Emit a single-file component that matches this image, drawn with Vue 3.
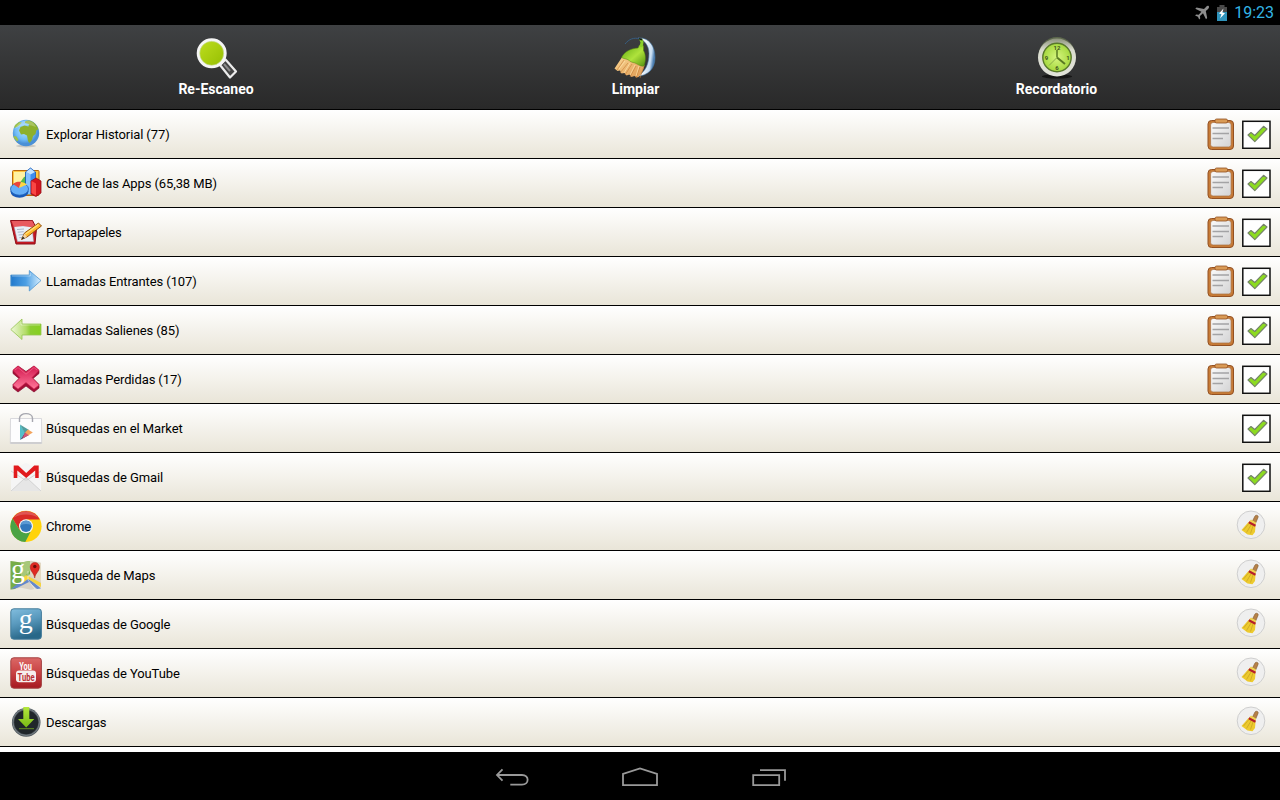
<template>
	<div class="screen">
		<div class="status-bar">
			<svg class="plane" width="16" height="16" viewBox="0 0 16 16">
				<path d="M14.800 1.200c-.8-.7-2-.2-2.800.7L10 4.100 2.500 2.600 1.300 3.800l6.100 3-2.700 3-2.600-.3-1 1 2.800 1.300 1.300 2.800 1-1-.2-2.600 3-2.700 3 6 1.200-1.200L11.800 6l2.300-2.100c.8-.9 1.300-2 .7-2.700z" />
			</svg>
			<svg width="12" height="16" viewBox="0 0 12 16">
				<path d="M3.500 0h5v2H11v14H1V2h2.500z" fill="#4a4a4a" />
				<path d="M1 7h10v9H1z" fill="#2f93bb" />
				<path d="M7.500 3.500 3 8.500l2.500.7L4 13.500 9 8.300l-2.600-.7z" fill="#fff" />
			</svg>
			<span class="clock">19:23</span>
		</div>

		<div class="toolbar">
			<button class="action">
				<svg width="48" height="48" viewBox="0 0 48 48">
					<defs>
						<linearGradient id="lens" x1="0" y1="0" x2="1" y2="1">
							<stop offset="0" stop-color="#bfdf20" />
							<stop offset="1" stop-color="#94bd00" />
						</linearGradient>
					</defs>
					<path d="m28 32 5.500-5.500 10.500 12-6 6z" fill="#444" stroke="#ececec" stroke-width="2.200" stroke-linejoin="round" />
					<path d="m32 31 6 7" stroke="#8a8a8a" stroke-width="2" />
					<circle cx="19.700" cy="20.300" r="13.500" fill="url(#lens)" stroke="#f5f5f5" stroke-width="3" />
					<circle cx="19.700" cy="20.300" r="12" fill="none" stroke="#c9dba0" stroke-width=".6" />
				</svg>
				<span>Re-Escaneo</span>
			</button>
			<button class="action">
				<svg width="48" height="48" viewBox="0 0 48 48">
					<defs>
						<linearGradient id="moon" x1="0" y1="0" x2="1" y2=".3">
							<stop offset=".5" stop-color="#f1f6fb" />
							<stop offset=".85" stop-color="#c7dcf0" />
							<stop offset="1" stop-color="#4e80b3" />
						</linearGradient>
						<linearGradient id="brush" x1="0" y1="0" x2="1" y2="1">
							<stop offset="0" stop-color="#fad795" />
							<stop offset="1" stop-color="#dd974e" />
						</linearGradient>
						<linearGradient id="leaf" x1="0" y1="0" x2="1" y2="1">
							<stop offset="0" stop-color="#60a912" />
							<stop offset=".55" stop-color="#afe33c" />
							<stop offset="1" stop-color="#55920e" />
						</linearGradient>
					</defs>
					<path d="M26 5c11-1 17 8 17 19.500C43 36 36 42.500 25 43.500c9-5 12-13 12-23C37 12 32 7 26 5z" fill="url(#moon)" stroke="#4779a6" stroke-width=".6" />
					<path d="M13 11c4-5 9-7 15-5" fill="none" stroke="#375d80" />
					<path d="M10.500 23.500 2.500 35.500l3 2.500 2.500-.5 1.500 3 3-.5 2 2.500 3-1 2 2.500 3-1 2 1.500 2-.5c3-3 5-7 6-12z" fill="url(#brush)" />
					<path d="m12 27-7 10m11-7-8 10m12-9-7 11m11-9-6 11m10-10-4 11m8-12-4 12" stroke="#c47c35" stroke-width=".6" />
					<path d="m13 28-6 8m11-6-6 10m11-8-5 10m9-9-3 10" stroke="#ffe4ac" stroke-width=".7" />
					<path d="M9.500 24.500C13 18 19 15.500 26 15l1.500-3 4 .8v4.700c2.500 4 2.500 10 .5 15.500-4 1-7-3-11-3.500-3-.5-4-3-7-3.500-1.500-.3-3-.7-4.500-1.500z" fill="url(#leaf)" stroke="#4e850c" stroke-width=".5" />
					<path d="m27 6 4 .5.500 3-1 5-3-1 1-4z" fill="#8bd02b" />
					<path d="m27 5 3 .5.500 2-3-.5z" fill="#142110" />
				</svg>
				<span>Limpiar</span>
			</button>
			<button class="action">
				<svg width="48" height="48" viewBox="0 0 48 48">
					<defs>
						<radialGradient id="dial">
							<stop offset="0" stop-color="#d6f57f" />
							<stop offset="1" stop-color="#a5d83e" />
						</radialGradient>
						<linearGradient id="rim" x1="0" y1="0" x2="0" y2="1">
							<stop offset="0" stop-color="#8c927b" />
							<stop offset=".3" stop-color="#dadccf" />
							<stop offset="1" stop-color="#e2e3da" />
						</linearGradient>
					</defs>
					<ellipse cx="24" cy="43.500" rx="15" ry="2" fill="#151515" />
					<circle cx="24" cy="22.500" r="18.500" fill="#5d684d" />
					<circle cx="24" cy="24.500" r="19" fill="url(#rim)" />
					<circle cx="24" cy="24.500" r="14.200" fill="url(#dial)" stroke="#58782a" stroke-width="1.400" />
					<path d="M24 17v7.500" stroke="#597a22" stroke-width="1.500" />
					<path d="m24 24.500 8 6.500" stroke="#597a22" stroke-width="2" />
					<path d="m24 24.500-8 8" stroke="#7c9d43" stroke-width=".8" />
					<g class="dial-text">
						<text x="24" y="16.500">12</text>
						<text x="35" y="26.500">1</text>
						<text x="24" y="37">6</text>
						<text x="13.500" y="26.500">9</text>
					</g>
				</svg>
				<span>Recordatorio</span>
			</button>
		</div>

		<ul class="list">
			<li
				v-for="item in items"
				:key="item.icon"
				class="row">
				<svg class="row-icon" width="32" height="32" viewBox="0 0 32 32">
					<g v-if="item.icon === 'globe'">
						<defs>
							<radialGradient id="sea" cx=".45" cy=".4">
								<stop offset="0" stop-color="#b3e4ff" />
								<stop offset=".7" stop-color="#6fbcf7" />
								<stop offset="1" stop-color="#4a90d6" />
							</radialGradient>
						</defs>
						<ellipse cx="16" cy="28" rx="10" ry="1.500" fill="#c9c8c2" />
						<circle cx="16" cy="15" r="13.200" fill="url(#sea)" />
						<path d="M15 3.500c5-3 11 1 13.500 8l-2 .5-1 4-2.500 2-1 4-2.500 3-1.500-2-1-5.500-3-1.500-3 .5-2-4 1.500-3.500 4-1.500 4 1 .5-2.500-4-1z" fill="#8db02c" />
						<path d="m5 7 4-3 3 .5-3 3-2 1.500-3 1zM3.500 18l3 .5 2 3.500-1.500 1.500L4 20z" fill="#9cc24a" />
						<path d="M5 11C9 1 22-1 26 9c-7-3-14-3-21 2z" fill="#fff" opacity=".25" />
					</g>
					<g v-else-if="item.icon === 'charts'">
						<rect x="2.500" y="3.500" width="26.500" height="25" rx="1" fill="#ffc640" stroke="#b9670c" />
						<path d="M4 5h16L8 20H4z" fill="#fff2a3" />
						<path d="m9 17 5-7 3-1v12z" fill="#55b84b" />
						<path d="m15.500 5 5-4 5 4v22h-10z" fill="#3d8cf0" stroke="#1458b3" stroke-width=".8" />
						<path d="m16 5 4.500 2.500V27H16z" fill="#83c1ff" />
						<path d="m16 5 4.500-3.500L25 5l-4.500 2.500z" fill="#c2e2ff" />
						<path d="m21 14 5-3 5 3v12l-5 3.500L21 27z" fill="#d5161e" stroke="#951019" stroke-width=".8" />
						<path d="m21.500 14 4.500 2.500v12L21.500 26z" fill="#f94644" />
						<ellipse cx="9.500" cy="24.500" rx="9" ry="6.200" fill="#185abb" />
						<ellipse cx="9.500" cy="22" rx="9" ry="6.200" fill="#65aef8" stroke="#1e61b8" stroke-width=".8" />
						<path d="m9 21-6-4c2-2 5-2.500 8-2.200z" fill="#ec463a" />
						<path d="m9 21 2-6c2 0 4 1 6 2.500z" fill="#ffd542" />
					</g>
					<g v-else-if="item.icon === 'notes'">
						<path d="M.5 4.500h22l4 8-1.500 15.500H6z" fill="#c71821" stroke="#8b101a" stroke-width="1" />
						<path d="M4 10h18l1.500 15.500h-16z" fill="#e9eff7" stroke="#a5b2c8" stroke-width=".5" />
						<path d="m1.500 5 20.500-.3 4 7.300-13-2-9 1z" fill="#e85a60" />
						<path d="m7 13.500 7-.5m-6.300 3.200 6-.5m-5.200 3.300 5-.5m-4.200 3.200 3-.3" stroke="#9aa7bd" stroke-width=".8" />
						<path d="m11.500 23.500 3-6.500L28.500 7l3 3L17 21z" fill="#ffb92c" stroke="#945110" />
						<path d="m15.500 18 13-9.500" stroke="#ffe078" stroke-width="1.500" />
						<path d="m11.500 23.500 3-6 2.500 3.500z" fill="#f2d3a2" />
						<path d="m11.500 23.500 1.400-3 1.800 1.800z" fill="#222" />
					</g>
					<g v-else-if="item.icon === 'incoming'">
						<defs>
							<linearGradient id="blue">
								<stop offset="0" stop-color="#2279cc" />
								<stop offset=".5" stop-color="#4c9fe4" />
								<stop offset="1" stop-color="#d7efff" />
							</linearGradient>
						</defs>
						<path d="M.8 10h18.500V5.500L31 15.500 19.300 26v-5H.8z" fill="url(#blue)" stroke="#5297cf" stroke-width=".8" />
						<path d="M2 11h18.300V8" fill="none" stroke="#fff" opacity=".4" />
					</g>
					<g v-else-if="item.icon === 'outgoing'">
						<defs>
							<linearGradient id="lime">
								<stop offset="0" stop-color="#eff9d9" />
								<stop offset=".5" stop-color="#b2dc67" />
								<stop offset=".65" stop-color="#8bcd32" />
								<stop offset="1" stop-color="#86d020" />
							</linearGradient>
						</defs>
						<path d="M31 10H12V5L.8 15.500 12 25.500V21h19z" fill="url(#lime)" stroke="#95c452" stroke-width=".8" />
						<path d="M11 8v3h19" fill="none" stroke="#fff" opacity=".4" />
					</g>
					<g v-else-if="item.icon === 'missed'">
						<defs>
							<linearGradient id="pink" x1="0" y1="0" x2="0" y2="1">
								<stop offset="0" stop-color="#d2174e" />
								<stop offset="1" stop-color="#ff789a" />
							</linearGradient>
						</defs>
						<path d="m3 7.500 5-4.500 8 5.500L24 3l5 4.500v3l-6 5 6 6v3.500l-5 4-8-6-8 6-5-4v-3.500l6-6-6-5z" fill="#a50e37" stroke="#850d2e" stroke-width=".7" />
						<path d="m3 7.300 5-4.300 8 6.500L24 3l5 4.300-7 7.200 7 7.500-5 4-8-6.500L8 26l-5-4 7-7.500z" fill="url(#pink)" stroke="#d62d59" stroke-width=".7" />
						<path d="m5 7 3-2.500 8 6.700 8-6.700L27 7" fill="none" stroke="#f26a8c" stroke-width=".7" />
					</g>
					<g v-else-if="item.icon === 'market'">
						<path d="M.5 6.500h31l.2 25H.3z" fill="#fdfdfe" stroke="#d0d0d5" stroke-width=".8" />
						<path d="M.5 30.800h31" stroke="#b9b9bd" />
						<path d="M9.500 10V6.500c0-6.500 13-6.500 13 0V10" fill="none" stroke="#a6a7af" stroke-width="1.400" />
						<path d="m10 12.500 5 8-5 7.500z" fill="#53bfc9" />
						<path d="m10 12.500 9 5.500-4 3.500z" fill="#529d9e" />
						<path d="m10 28 5-7.500 4 2.500z" fill="#46567e" />
						<path d="m18 17.500 4.800 3L18 23.500l-3-3z" fill="#f3a35c" />
						<path d="m15 20.500 3.500 2.800L12.500 26.500z" fill="#d85470" />
					</g>
					<g v-else-if="item.icon === 'gmail'">
						<path d="M1 9 16 2l15 7v21H1z" fill="#f5f5f5" />
						<path d="m1 30 15-14 15 14z" fill="#e6e6e6" />
						<path d="m1 30 13-12q2-1.500 4 0l13 12M1 10l14 9h2l14-9" fill="none" stroke="#c9c9c9" stroke-width=".7" />
						<path d="M3.700 17V4.500h4.500l8 7.500 8-7.500h4.500V17h-3.500V9.500L16.200 17 7.300 9.500V17z" fill="#e11b1d" />
					</g>
					<g v-else-if="item.icon === 'chrome'">
						<circle cx="16" cy="16.300" r="15.600" fill="#ffd30b" />
						<path d="M2.500 8.500a15.600 15.600 0 0 1 27.300 1H16L9.500 20z" fill="#d92c27" />
						<path d="M2.500 8.500 9.500 20l6.500 3.300 5-2.300-5.700 11A15.600 15.600 0 0 1 2.500 8.500z" fill="#4aa346" />
						<path d="M4 7.500C9-1 23-1 28 7.500c-7-4-17-4-24 0z" fill="#fff" opacity=".2" />
						<circle cx="16" cy="16.200" r="7" fill="#f4f4f4" />
						<circle cx="16" cy="16.200" r="5.800" fill="#3378bd" />
						<path d="M10.800 15a5.300 5.300 0 0 1 10.400 0q-5-2-10.400 0z" fill="#5c9ad3" />
					</g>
					<g v-else-if="item.icon === 'maps'">
						<path d="m.5 2 10 1.500L21 1.700l10 2v25l-10 2-10-2-10.500 2z" fill="#d9d3c5" />
						<path d="M.5 2 11 3.500 20 2v13L5 30l-4.500.5z" fill="#77ad48" />
						<path d="m11 3.500 9-1.500v10l-9 9z" fill="#a7c879" />
						<path d="M21 10 31 4v19l-10-6z" fill="#e4d9c3" />
						<path d="m1 30 10-8 6-4 14 11.500-4 .5-8-7-12 6z" fill="#6489cc" />
						<path d="m11 20 5-4 15 8v4l-13-8-7 5z" fill="#f5d441" />
						<path d="M18 12v9l7 9" fill="none" stroke="#fff" opacity=".5" />
						<text class="maps-g" x="8" y="19">g</text>
						<path d="M24.700 19c-.3-5-4.500-6-4.500-11a4.600 4.600 0 0 1 9.200 0c0 5-4.300 6-4.700 11z" fill="#df2923" stroke="#a61c18" stroke-width=".5" />
						<circle cx="24.800" cy="7.500" r="1.700" fill="#6d0d0b" />
					</g>
					<g v-else-if="item.icon === 'google'">
						<defs>
							<linearGradient id="azure" x1="0" y1="0" x2=".3" y2="1">
								<stop offset="0" stop-color="#82bedf" />
								<stop offset=".5" stop-color="#5999bd" />
								<stop offset="1" stop-color="#286788" />
							</linearGradient>
						</defs>
						<rect x=".8" y=".8" width="30.600" height="30.400" rx="3" fill="url(#azure)" stroke="#457c9b" />
						<text class="google-g" x="15.800" y="20">g</text>
					</g>
					<g v-else-if="item.icon === 'youtube'">
						<defs>
							<linearGradient id="ruby" x1="0" y1="0" x2="0" y2="1">
								<stop offset="0" stop-color="#db6866" />
								<stop offset=".5" stop-color="#c84142" />
								<stop offset="1" stop-color="#a51820" />
							</linearGradient>
						</defs>
						<rect x=".8" y=".8" width="30.600" height="30.400" rx="3" fill="url(#ruby)" stroke="#a34141" />
						<rect x="6" y="13.500" width="20" height="11.700" rx="3" fill="#f6eeee" />
						<text class="tube" x="15.500" y="12.700" textLength="12.500" lengthAdjust="spacingAndGlyphs" fill="#fff">You</text>
						<text class="tube" x="16" y="23.700" textLength="17" lengthAdjust="spacingAndGlyphs" fill="#b93035">Tube</text>
					</g>
					<g v-else>
						<defs>
							<linearGradient id="down" x1="0" y1="0" x2="0" y2="1">
								<stop offset="0" stop-color="#b4e83c" />
								<stop offset="1" stop-color="#79bb15" />
							</linearGradient>
						</defs>
						<circle cx="16.200" cy="16.400" r="14.300" fill="#525a60" />
						<circle cx="16.200" cy="16.200" r="13.300" fill="none" stroke="#818b91" stroke-width=".8" />
						<circle cx="16.200" cy="16.200" r="12" fill="#20262a" />
						<path d="M13.300 1h6v12h5l-8.100 8.500L8 13h5.300z" fill="url(#down)" />
						<path d="M9 22.700h15" stroke="#638f22" />
					</g>
				</svg>
				<span class="label">{{ item.label }}</span>
				<svg v-if="item.detail" class="clipboard" width="28" height="32" viewBox="0 0 28 32">
					<defs>
						<linearGradient id="paper" x1="0" y1="0" x2="1" y2="1">
							<stop offset="0" stop-color="#fafafa" />
							<stop offset="1" stop-color="#d3d3d4" />
						</linearGradient>
					</defs>
					<rect x="1" y="2.500" width="25.500" height="29" rx="3.500" fill="#c77b36" stroke="#935022" />
					<rect x="3.600" y="4.500" width="20.500" height="24.500" rx="2.500" fill="url(#paper)" stroke="#aa7040" stroke-width=".7" />
					<rect x="8" y="1" width="12.500" height="4" rx="1.500" fill="#d99a55" stroke="#935022" stroke-width=".8" />
					<path d="M5.500 10h16.500M5.500 15.500h16.500M5.500 20.500h10.500" stroke="#a3a3a5" stroke-width="1.300" />
				</svg>
				<svg v-if="item.checkable" class="checkbox" width="29" height="29" viewBox="0 0 29 29">
					<rect x=".8" y="1.300" width="27.200" height="27" fill="#fff" stroke="#111" stroke-width="1.500" />
					<path d="m6 15 3-2.500 3.800 3L21.500 6.300 25 9 12.800 21.700z" fill="#8cdb20" stroke="#75836a" stroke-width="1.100" stroke-linejoin="round" />
				</svg>
				<svg v-else class="sweep" width="30" height="30" viewBox="0 0 30 30">
					<circle cx="15" cy="14.800" r="13.800" fill="#efefef" stroke="#cfcfcf" />
					<path d="m16.500 11 2.500-5c1-1.500 4-.5 3 1.500L19.700 13z" fill="#b68147" stroke="#80572d" stroke-width=".6" />
					<path d="m12.500 12 7 4-.5 6-2.500 3.300-5-.8-6-4.500z" fill="#edca2d" />
					<path d="m12.500 14-5 6m7.500-5-4.500 7.500m6.500-6.500-2.500 7.500" stroke="#c4a022" stroke-width=".7" />
					<path d="m13 11.500 2-2 5 3-.5 3.500z" fill="#efd451" />
					<path d="m12.800 12.200 6.700 3.500" stroke="#b51f2b" stroke-width="2.200" />
				</svg>
			</li>
		</ul>

		<div class="nav-bar">
			<svg width="40" height="24" viewBox="0 0 40 24">
				<path d="M5 11h25c7.500 0 7.500 9.700 0 9.700H18.300M10.500 5.300 5 11l5.500 5.700" />
			</svg>
			<svg width="40" height="24" viewBox="0 0 40 24">
				<path d="M3 21.200V10l17-5.600L37 10v11.200z" />
			</svg>
			<svg width="40" height="24" viewBox="0 0 40 24">
				<path d="M5.200 11.200h26v10h-26zM12 6.200h25v10.500" />
			</svg>
		</div>
	</div>
</template>

<script setup>
	const items = [
		{ icon: 'globe', label: 'Explorar Historial (77)', detail: true, checkable: true },
		{ icon: 'charts', label: 'Cache de las Apps (65,38 MB)', detail: true, checkable: true },
		{ icon: 'notes', label: 'Portapapeles', detail: true, checkable: true },
		{ icon: 'incoming', label: 'LLamadas Entrantes (107)', detail: true, checkable: true },
		{ icon: 'outgoing', label: 'Llamadas Salienes (85)', detail: true, checkable: true },
		{ icon: 'missed', label: 'Llamadas Perdidas (17)', detail: true, checkable: true },
		{ icon: 'market', label: 'Búsquedas en el Market', checkable: true },
		{ icon: 'gmail', label: 'Búsquedas de Gmail', checkable: true },
		{ icon: 'chrome', label: 'Chrome' },
		{ icon: 'maps', label: 'Búsqueda de Maps' },
		{ icon: 'google', label: 'Búsquedas de Google' },
		{ icon: 'youtube', label: 'Búsquedas de YouTube' },
		{ icon: 'downloads', label: 'Descargas' },
	];
</script>

<style>
	body {
		margin: 0;
		background: #000;
	}
</style>

<style scoped>
	.screen {
		display: flex;
		flex-direction: column;
		width: 1280px;
		height: 800px;
		overflow: hidden;
		background: #fff;
		font-family: Roboto, 'Noto Sans', sans-serif;
	}
	.status-bar {
		display: flex;
		align-items: center;
		justify-content: flex-end;
		box-sizing: border-box;
		height: 25px;
		padding-right: 6px;
		background: #000;
	}
	.plane {
		margin-right: 6px;
		fill: #8d8d8d;
	}
	.clock {
		margin-left: 6px;
		color: #33b5e5;
		font-size: 16px;
		line-height: 25px;
	}
	.toolbar {
		display: grid;
		grid-template-columns: 432px 407px 435px;
		box-sizing: border-box;
		height: 85px;
		border-bottom: 1px solid #000;
		background: linear-gradient(#3f4143, #363738 40%, #292929);
	}
	.action {
		display: flex;
		flex-direction: column;
		align-items: center;
		padding: 8px 0 0;
		border: 0;
		background: none;
		color: #fff;
		font: bold 14px/16px Roboto, 'Noto Sans', sans-serif;
	}
	.dial-text {
		fill: #3f541d;
		font-size: 6px;
		text-anchor: middle;
	}
	.list {
		flex: 1;
		margin: 0;
		padding: 0;
		list-style: none;
	}
	.row {
		display: flex;
		align-items: flex-start;
		box-sizing: border-box;
		height: 49px;
		padding: 8px 9px 0 10px;
		border-bottom: 1px solid #000;
		background: linear-gradient(#fff, #e9e5d8);
	}
	.row-icon {
		overflow: visible;
	}
	.label {
		flex: 1;
		margin-left: 4px;
		color: #000;
		font-size: 13px;
		line-height: 33px;
		letter-spacing: -0.1px;
	}
	.clipboard {
		margin-right: 7px;
	}
	.checkbox {
		margin-top: 2px;
	}
	.sweep {
		margin-right: 5px;
	}
	.maps-g,
	.google-g {
		fill: #fff;
		font-family: 'Liberation Serif', serif;
		font-size: 28px;
		text-anchor: middle;
	}
	.tube {
		font-size: 11.5px;
		font-weight: bold;
		text-anchor: middle;
	}
	.nav-bar {
		display: flex;
		align-items: center;
		justify-content: center;
		gap: 88px;
		height: 48px;
		background: #000;
	}
	.nav-bar path {
		fill: none;
		stroke: #999;
		stroke-width: 1.8;
	}
</style>
